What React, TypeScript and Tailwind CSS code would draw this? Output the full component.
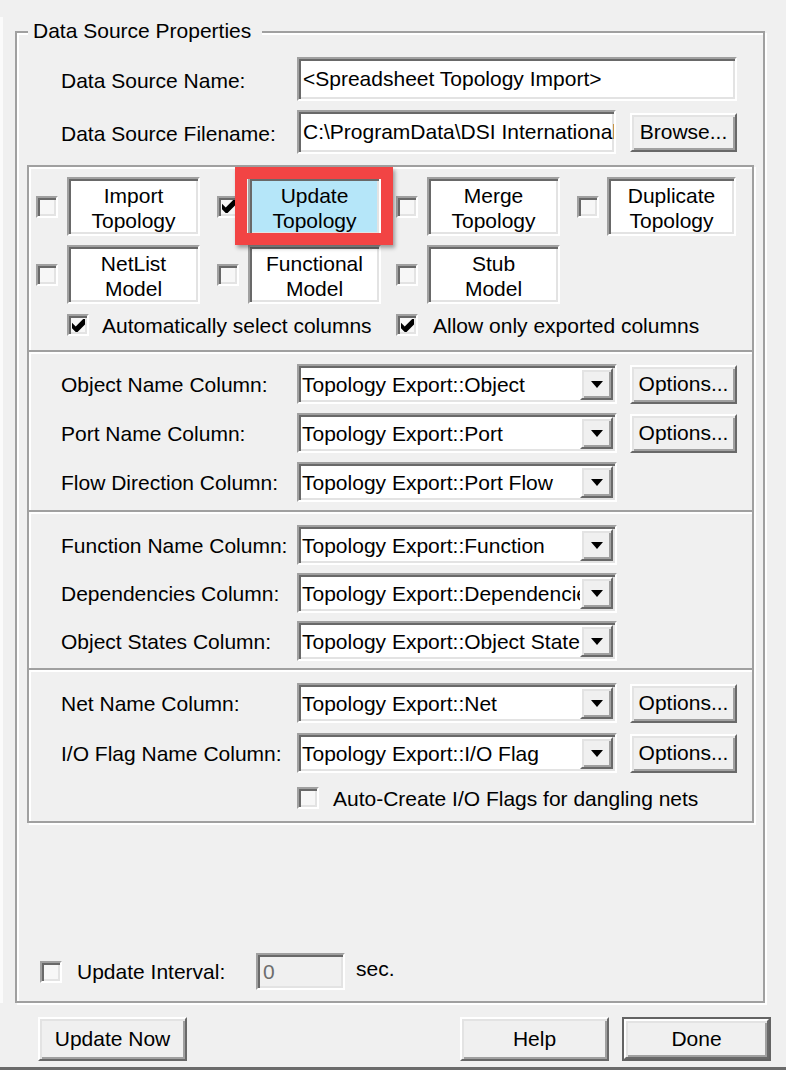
import React from "react";

const sunken =
  "border-2 border-t-[#a0a0a0] border-l-[#a0a0a0] border-b-white border-r-white shadow-[inset_2px_2px_0_#696969,inset_-2px_-2px_0_#e3e3e3]";
const raised =
  "border-2 border-t-white border-l-white border-b-[#696969] border-r-[#696969] shadow-[inset_2px_2px_0_#e3e3e3,inset_-2px_-2px_0_#a0a0a0] bg-[#f0f0f0]";
const etched = "border-2 border-[#a0a0a0] shadow-[inset_2px_2px_0_#fff,2px_2px_0_#fff]";

function Check({ checked = false }: { checked?: boolean }) {
  return (
    <div
      className={`flex h-[22px] w-[22px] shrink-0 items-center justify-center bg-[#f7f7f7] ${sunken}`}
    >
      {checked && (
        <svg width="13" height="13" viewBox="0 0 7 7">
          <path d="M0 2 L2 4 L6 0 L7 0 L7 3 L3 7 L2 7 L0 5 Z" fill="#000" />
        </svg>
      )}
    </div>
  );
}

function Toggle({
  lines,
  className,
  blue = false,
}: {
  lines: [string, string];
  className: string;
  blue?: boolean;
}) {
  return (
    <div
      className={`flex h-[59px] shrink-0 flex-col items-center justify-center pt-[2px] leading-[25px] ${sunken} ${
        blue ? "bg-[#b5e6f9]" : "bg-white"
      } ${className}`}
    >
      <span>{lines[0]}</span>
      <span>{lines[1]}</span>
    </div>
  );
}

function Button({ label, className }: { label: string; className: string }) {
  return (
    <div className={`flex shrink-0 items-center justify-center ${raised} ${className}`}>
      {label}
    </div>
  );
}

function DropBtn() {
  return (
    <div className={`flex h-full w-[33px] shrink-0 items-center justify-center ${raised}`}>
      <svg width="12" height="7" viewBox="0 0 12 7">
        <path d="M0 0 H12 L6 7 Z" fill="#000" />
      </svg>
    </div>
  );
}

function Combo({ text }: { text: string }) {
  return (
    <div className={`flex h-[40px] w-[320px] shrink-0 items-center bg-white p-[2px] ${sunken}`}>
      <span className="block min-w-0 flex-1 overflow-hidden whitespace-nowrap pl-[1px] pt-[2px]">{text}</span>
      <DropBtn />
    </div>
  );
}

function ComboRow({
  label,
  value,
  options = false,
  className = "",
}: {
  label: string;
  value: string;
  options?: boolean;
  className?: string;
}) {
  return (
    <div className={`flex h-[40px] items-center pl-[32px] ${className}`}>
      <span className="w-[236px] shrink-0 whitespace-nowrap pt-[2px]">{label}</span>
      <Combo text={value} />
      {options && <Button label="Options..." className="ml-[13px] h-[39px] w-[107px]" />}
    </div>
  );
}

function Divider() {
  return (
    <div className="shrink-0">
      <div className="h-[2px] bg-[#a0a0a0]" />
      <div className="h-[2px] bg-white" />
    </div>
  );
}

export default function App() {
  return (
    <div className="relative flex h-[1070px] w-[786px] flex-col overflow-hidden bg-[#f0f0f0] font-['Liberation_Sans',Arial,sans-serif] text-[21px] leading-[24px] text-black">
      <div className="mt-[17px] flex h-[986px] border-l-[3px] border-[#fbfbfb] pl-[12px] pt-[14px]">
        <div className={`relative flex h-[972px] w-[750px] flex-col ${etched}`}>
          <span className="absolute -top-[14px] left-[11px] w-[234px] bg-[#f0f0f0] pl-[5px] whitespace-nowrap">
            Data Source Properties
          </span>

          {/* Name */}
          <div className="mt-[24px] flex items-center pl-[44px]">
            <span className="w-[236px] shrink-0 whitespace-nowrap pt-[3px]">Data Source Name:</span>
            <div className={`flex h-[44px] w-[440px] items-center bg-white pl-[4px] ${sunken}`}>
              <span className="block min-w-0 flex-1 overflow-hidden whitespace-nowrap">
                &lt;Spreadsheet Topology Import&gt;
              </span>
            </div>
          </div>

          {/* Filename */}
          <div className="mt-[9px] flex items-center pl-[44px]">
            <span className="w-[236px] shrink-0 whitespace-nowrap pt-[3px]">Data Source Filename:</span>
            <div className={`flex h-[44px] w-[319px] shrink-0 items-center bg-white pl-[4px] ${sunken}`}>
              <span className="block min-w-0 flex-1 overflow-hidden whitespace-nowrap">
                {"C:\\ProgramData\\DSI International\\eXpress"}
              </span>
            </div>
            <Button label="Browse..." className="ml-[14px] h-[39px] w-[107px]" />
          </div>

          {/* Panels */}
          <div className={`ml-[10px] mt-[11px] flex w-[727px] flex-col ${etched}`}>
            {/* Panel 1 */}
            <div className="flex h-[183px] flex-col pl-[7px] pt-[10px]">
              <div className="flex h-[59px] items-center">
                <div className="flex w-[181px] shrink-0 items-center">
                  <Check />
                  <Toggle lines={["Import", "Topology"]} className="ml-[9px] w-[133px]" />
                </div>
                <div className="flex w-[179px] shrink-0 items-center">
                  <Check checked />
                  <div className="relative ml-[9px]">
                    <Toggle lines={["Update", "Topology"]} className="w-[133px]" blue />
                    <span className="absolute -bottom-[9px] -left-[13px] -right-[12px] -top-[10px] border-[12px] border-[#f24444] shadow-[2px_3px_4px_rgba(0,0,0,0.35)]" />
                  </div>
                </div>
                <div className="flex w-[181px] shrink-0 items-center">
                  <Check />
                  <Toggle lines={["Merge", "Topology"]} className="ml-[9px] w-[133px]" />
                </div>
                <div className="flex shrink-0 items-center">
                  <Check />
                  <Toggle lines={["Duplicate", "Topology"]} className="ml-[8px] w-[129px]" />
                </div>
              </div>
              <div className="mt-[9px] flex h-[59px] items-center">
                <div className="flex w-[181px] shrink-0 items-center">
                  <Check />
                  <Toggle lines={["NetList", "Model"]} className="ml-[9px] w-[133px]" />
                </div>
                <div className="flex w-[179px] shrink-0 items-center">
                  <Check />
                  <Toggle lines={["Functional", "Model"]} className="ml-[9px] w-[133px]" />
                </div>
                <div className="flex w-[181px] shrink-0 items-center">
                  <Check />
                  <Toggle lines={["Stub", "Model"]} className="ml-[9px] w-[133px]" />
                </div>
              </div>
              <div className="mt-[10px] flex h-[22px] items-center">
                <div className="flex w-[360px] shrink-0 items-center pl-[31px]">
                  <Check checked />
                  <span className="ml-[13px] whitespace-nowrap pt-[2px]">Automatically select columns</span>
                </div>
                <Check checked />
                <span className="ml-[15px] whitespace-nowrap pt-[2px]">Allow only exported columns</span>
              </div>
            </div>

            <Divider />

            {/* Panel 2 */}
            <div className="flex h-[156px] flex-col pt-[10px]">
              <ComboRow label="Object Name Column:" value="Topology Export::Object" options />
              <ComboRow className="mt-[9px]" label="Port Name Column:" value="Topology Export::Port" options />
              <ComboRow className="mt-[9px]" label="Flow Direction Column:" value="Topology Export::Port Flow" />
            </div>

            <Divider />

            {/* Panel 3 */}
            <div className="flex h-[154px] flex-col pt-[11px]">
              <ComboRow label="Function Name Column:" value="Topology Export::Function" />
              <ComboRow className="mt-[8px]" label="Dependencies Column:" value="Topology Export::Dependencies" />
              <ComboRow className="mt-[8px]" label="Object States Column:" value="Topology Export::Object States" />
            </div>

            <Divider />

            {/* Panel 4 */}
            <div className="flex h-[149px] flex-col pt-[11px]">
              <ComboRow label="Net Name Column:" value="Topology Export::Net" options />
              <ComboRow className="mt-[10px]" label="I/O Flag Name Column:" value="Topology Export::I/O Flag" options />
              <div className="mt-[14px] flex h-[22px] items-center pl-[268px]">
                <Check />
                <span className="ml-[14px] whitespace-nowrap pt-[2px]">Auto-Create I/O Flags for dangling nets</span>
              </div>
            </div>
          </div>

          {/* Update interval */}
          <div className="mb-[11px] mt-auto flex h-[37px] items-center pl-[23px]">
            <Check />
            <span className="ml-[15px] w-[179px] shrink-0 whitespace-nowrap">Update Interval:</span>
            <div className={`flex h-[37px] w-[89px] shrink-0 items-center bg-[#f0f0f0] pl-[5px] text-[#6d6d6d] ${sunken}`}>
              0
            </div>
            <span className="ml-[11px] pb-[5px]">sec.</span>
          </div>
        </div>
      </div>

      {/* Bottom buttons */}
      <div className="mt-[14px] flex items-center">
        <Button label="Update Now" className="ml-[38px] h-[44px] w-[149px]" />
        <Button label="Help" className="ml-[273px] h-[44px] w-[149px]" />
        <div className="ml-[13px] h-[44px] w-[149px] shrink-0 border-2 border-[#646464]">
          <div className={`flex h-full w-full items-center justify-center ${raised}`}>Done</div>
        </div>
      </div>

      <div className="mt-auto h-[3px] shrink-0 bg-[#6b6b6b]" />
    </div>
  );
}
